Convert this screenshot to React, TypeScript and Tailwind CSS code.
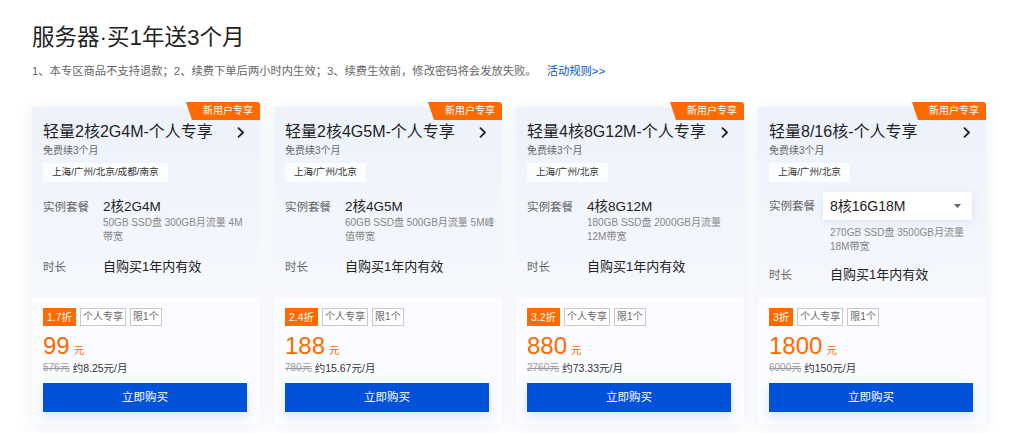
import React from 'react';

type Card = {
  title: string;
  region: string;
  spec: string;
  desc: string;
  discount: string;
  price: string;
  orig: string;
  monthly: string;
  select?: boolean;
};

const cards: Card[] = [
  { title: '轻量2核2G4M-个人专享', region: '上海/广州/北京/成都/南京', spec: '2核2G4M', desc: '50GB SSD盘 300GB月流量 4M 带宽', discount: '1.7折', price: '99', orig: '576元', monthly: '约8.25元/月' },
  { title: '轻量2核4G5M-个人专享', region: '上海/广州/北京', spec: '2核4G5M', desc: '60GB SSD盘 500GB月流量 5M峰值带宽', discount: '2.4折', price: '188', orig: '780元', monthly: '约15.67元/月' },
  { title: '轻量4核8G12M-个人专享', region: '上海/广州/北京', spec: '4核8G12M', desc: '180GB SSD盘 2000GB月流量 12M带宽', discount: '3.2折', price: '880', orig: '2760元', monthly: '约73.33元/月' },
  { title: '轻量8/16核-个人专享', region: '上海/广州/北京', spec: '8核16G18M', desc: '270GB SSD盘 3500GB月流量 18M带宽', discount: '3折', price: '1800', orig: '6000元', monthly: '约150元/月', select: true },
];

function Chevron() {
  return (
    <svg width="8" height="11" viewBox="0 0 8 11" fill="none">
      <path d="M1.5 1.2 L6 5.5 L1.5 9.8" stroke="#222" strokeWidth="1.8" strokeLinecap="round" strokeLinejoin="round" />
    </svg>
  );
}

function ProductCard({ c }: { c: Card }) {
  return (
    <div className="relative w-[228px] shrink-0 shadow-[0_2px_14px_rgba(55,99,170,0.10)]">
      <div className="absolute right-0 top-[-5px] h-[18px] w-[74px] bg-[#ff6a00] rounded-tr-[3px] text-white text-[10px] leading-[18px] pl-[17px] [clip-path:polygon(0_0,100%_0,100%_100%,6px_100%)]">
        新用户专享
      </div>
      <div className="h-[191px] bg-gradient-to-b from-[#edf2fb] to-[#f6f8fd] px-[11px] pt-[16px]">
        <div className="flex items-center justify-between pr-[4px]">
          <div className="text-[16px] leading-[18px] text-[#222]">{c.title}</div>
          <Chevron />
        </div>
        <div className="mt-[3px] text-[10px] leading-[14px] text-[#666]">免费续3个月</div>
        <div className="mt-[5px] inline-flex h-[19px] items-center bg-white/80 px-[9px] text-[9.6px] text-[#333]">{c.region}</div>
        {c.select ? (
          <>
            <div className="mt-[10px] flex items-center">
              <div className="w-[54px] text-[11.5px] text-[#666]">实例套餐</div>
              <div className="flex h-[28px] w-[149px] items-center justify-between bg-white pl-[7px] pr-[11px] shadow-[0_2px_8px_rgba(55,99,170,0.12)]">
                <span className="text-[14px] text-[#222]">{c.spec}</span>
                <svg width="7" height="4" viewBox="0 0 7 4"><path d="M0 0 H7 L3.5 4 Z" fill="#666" /></svg>
              </div>
            </div>
            <div className="ml-[61px] mt-[6px] w-[144px] text-[10px] leading-[13.5px] text-[#888]">{c.desc}</div>
            <div className="mt-[13px] flex items-center leading-[18px]">
              <div className="w-[61px] text-[11.5px] text-[#666]">时长</div>
              <div className="text-[13px] text-[#222]">自购买1年内有效</div>
            </div>
          </>
        ) : (
          <>
            <div className="mt-[16px] flex items-start leading-[18px]">
              <div className="w-[60px] shrink-0 text-[11.5px] text-[#666]">实例套餐</div>
              <div className="text-[13.5px] text-[#222]">{c.spec}</div>
            </div>
            <div className="ml-[60px] w-[150px] text-[10px] leading-[14px] text-[#888]">{c.desc}</div>
            <div className="mt-[14px] flex items-center leading-[18px]">
              <div className="w-[60px] text-[11.5px] text-[#666]">时长</div>
              <div className="text-[13px] text-[#222]">自购买1年内有效</div>
            </div>
          </>
        )}
      </div>
      <div className="bg-[#fbfcff] pl-[11px] pr-[13px] pt-[10px] pb-[12px]">
        <div className="flex h-[18px] gap-[4px]">
          <span className="h-[18px] bg-[#ff6a00] px-[4px] text-[10.5px] leading-[18px] text-white">{c.discount}</span>
          <span className="h-[18px] border border-[#c8c8c8] bg-white px-[2px] text-[10px] leading-[16px] text-[#666]">个人专享</span>
          <span className="h-[18px] border border-[#c8c8c8] bg-white px-[2px] text-[10px] leading-[16px] text-[#666]">限1个</span>
        </div>
        <div className="mt-[6px] flex h-[28px] items-baseline text-[#ff6a00]">
          <span className="text-[24px] leading-[28px]">{c.price}</span>
          <span className="ml-[4px] text-[10.5px] leading-none">元</span>
        </div>
        <div className="mt-[1px] flex h-[14px] items-center gap-[3px]">
          <span className="text-[10px] leading-[14px] text-[#999] line-through">{c.orig}</span>
          <span className="text-[10.5px] leading-[14px] text-[#333]">{c.monthly}</span>
        </div>
        <button className="mt-[8px] flex h-[29px] w-full items-center justify-center bg-[#0052d9] text-[11.5px] text-white shadow-[0_4px_10px_rgba(0,82,217,0.15)]">
          立即购买
        </button>
      </div>
    </div>
  );
}

export default function App() {
  return (
    <div className="min-h-[433px] w-[1024px] bg-white pl-[32px] pt-[23px] font-['Liberation_Sans','Noto_Sans_CJK_SC',sans-serif]">
      <h1 className="text-[22.5px] leading-[30px] text-[#222]">服务器·买1年送3个月</h1>
      <div className="mt-[9px] flex items-center text-[11.3px] leading-[18px]">
        <span className="text-[#666]">1、本专区商品不支持退款；2、续费下单后两小时内生效；3、续费生效前，修改密码将会发放失败。</span>
        <a className="ml-[10px] text-[#0052d9]">活动规则&gt;&gt;</a>
      </div>
      <div className="mt-[27px] flex gap-[14px]">
        {cards.map((c) => (
          <ProductCard key={c.title} c={c} />
        ))}
      </div>
    </div>
  );
}
